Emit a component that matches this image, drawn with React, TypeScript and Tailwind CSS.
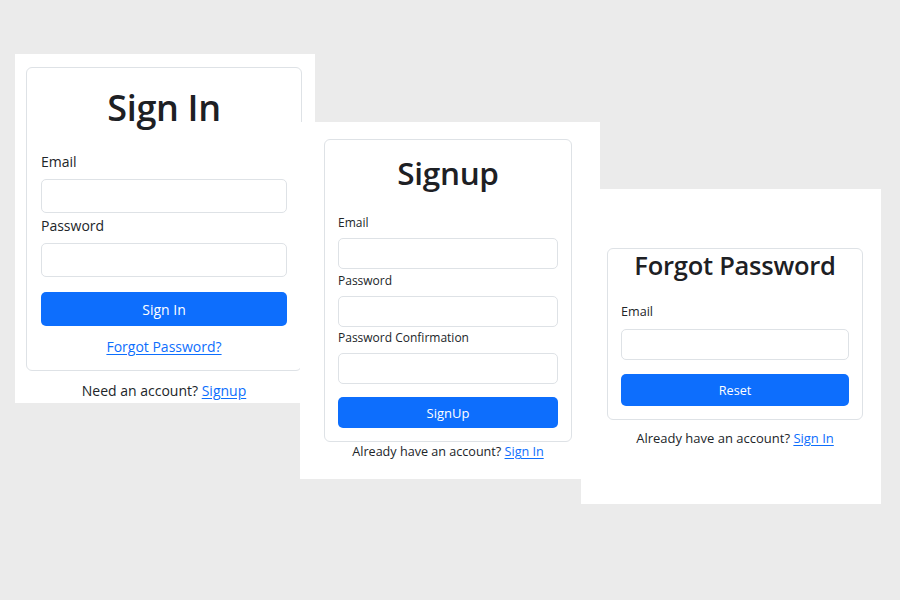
import { FC, JSX } from 'react';
import { clsx } from 'clsx';

// Bootstrap-ish palette
const inputClasses = 'block w-full rounded-[5px] border border-[#dee2e6] bg-white';
const buttonClasses = 'block w-full rounded-[5px] bg-[#0d6efd] text-center text-white';
const linkClasses = 'text-[#0d6efd] underline underline-offset-2';
const titleClasses = 'text-center font-semibold tracking-[-0.01em] text-[#1d2024]';

interface FieldProps {
  label: string;
  labelClass: string;
  inputClass: string;
}

const Field: FC<FieldProps> = ({ label, labelClass, inputClass }): JSX.Element => (
  <div>
    <label className={clsx('block text-[#212529]', labelClass)}>{label}</label>
    <div className={clsx(inputClasses, inputClass)} />
  </div>
);

const SignInShot: FC = (): JSX.Element => (
  <div
    data-tag="shot-signin"
    className="absolute top-[54px] left-[15px] z-10 h-[349px] w-[300px] bg-white"
  >
    <div className="mt-[13px] ml-[11px] w-[276px]">
      <div className="rounded-[6px] border border-[#dee2e6] px-[14px] pt-[18px] pb-[13px]">
        <h1 className={clsx(titleClasses, 'text-[36px] leading-[44px]')}>Sign In</h1>
        <div className="mt-[22px]">
          <Field
            label="Email"
            labelClass="text-[14px] leading-[20px]"
            inputClass="mt-[7px] h-[34px]"
          />
        </div>
        <div className="mt-[3px]">
          <Field
            label="Password"
            labelClass="text-[14px] leading-[20px]"
            inputClass="mt-[7px] h-[34px]"
          />
        </div>
        <div className={clsx(buttonClasses, 'mt-[15px] h-[34px] text-[14px] leading-[36px]')}>Sign In</div>
        <p className="mt-[11px] text-center text-[14px] leading-[20px]">
          <a className={linkClasses}>Forgot Password?</a>
        </p>
      </div>
      <p className="mt-[10px] text-center text-[14px] leading-[20px] text-[#212529]">
        Need an account? <a className={linkClasses}>Signup</a>
      </p>
    </div>
  </div>
);

const SignUpShot: FC = (): JSX.Element => (
  <div
    data-tag="shot-signup"
    className="absolute top-[122px] left-[300px] z-20 h-[357px] w-[300px] bg-white"
  >
    <div className="mt-[17px] ml-[24px] w-[248px]">
      <div className="rounded-[6px] border border-[#dee2e6] px-[13px] pt-[14px] pb-[13px]">
        <h1 className={clsx(titleClasses, 'text-[31.5px] leading-[38px]')}>Signup</h1>
        <div className="mt-[22px]">
          <Field
            label="Email"
            labelClass="text-[12px] leading-[18px]"
            inputClass="mt-[6px] h-[31px]"
          />
        </div>
        <div className="mt-[3px]">
          <Field
            label="Password"
            labelClass="text-[12px] leading-[18px]"
            inputClass="mt-[6px] h-[31px]"
          />
        </div>
        <div className="mt-[2px]">
          <Field
            label="Password Confirmation"
            labelClass="text-[12px] leading-[18px]"
            inputClass="mt-[6px] h-[31px]"
          />
        </div>
        <div className={clsx(buttonClasses, 'mt-[13px] h-[31px] text-[13px] leading-[33px]')}>SignUp</div>
      </div>
      <p className="mt-[1px] text-center text-[12.6px] leading-[18px] text-[#212529]">
        Already have an account? <a className={linkClasses}>Sign In</a>
      </p>
    </div>
  </div>
);

const ForgotShot: FC = (): JSX.Element => (
  <div
    data-tag="shot-forgot"
    className="absolute top-[189px] left-[581px] z-30 h-[315px] w-[300px] bg-white"
  >
    <div className="mt-[59px] ml-[26px] w-[256px]">
      <div className="rounded-[6px] border border-[#dee2e6] px-[13px] pb-[13px]">
        <h1 className={clsx(titleClasses, 'text-[25.5px] leading-[33px]')}>Forgot Password</h1>
        <div className="mt-[21px]">
          <Field
            label="Email"
            labelClass="text-[12.6px] leading-[18px]"
            inputClass="mt-[8px] h-[31px]"
          />
        </div>
        <div className={clsx(buttonClasses, 'mt-[14px] h-[32px] text-[12.6px] leading-[34px]')}>Reset</div>
      </div>
      <p className="mt-[9px] text-center text-[13px] leading-[18px] text-[#212529]">
        Already have an account? <a className={linkClasses}>Sign In</a>
      </p>
    </div>
  </div>
);

export default function App(): JSX.Element {
  return (
    <div className="relative h-[600px] w-[900px] overflow-hidden bg-[#ebebeb] font-['Open_Sans',sans-serif]">
      <SignInShot />
      <SignUpShot />
      <ForgotShot />
    </div>
  );
}
